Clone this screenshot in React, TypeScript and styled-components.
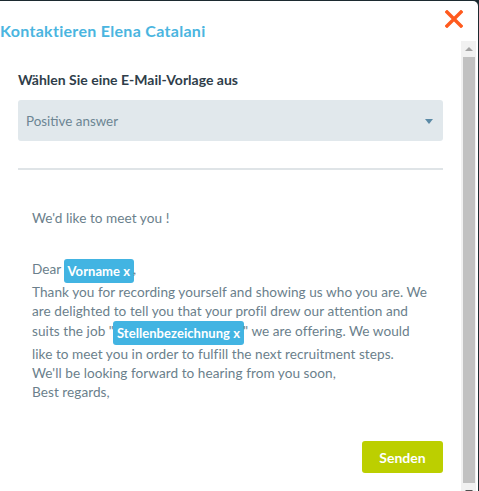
import React from "react";
import styled, { createGlobalStyle } from "styled-components";

const GlobalStyle = createGlobalStyle`
  html, body {
    margin: 0;
    height: 100%;
    overflow: hidden;
    background: #1c2a30;
    font-family: Lato, "Noto Sans", sans-serif;
  }
`;

const Dialog = styled.div`
  width: 478px;
  height: 500px;
  margin-top: 1px;
  background: #ffffff;
  border-top-right-radius: 5px;
  display: flex;
  flex-direction: column;
`;

const Header = styled.div`
  height: 40px;
  flex-shrink: 0;
  display: flex;
  align-items: flex-start;
  justify-content: space-between;
`;

const Title = styled.h2`
  margin: 21px 0 0;
  font-size: 16px;
  font-weight: 700;
  letter-spacing: 0.3px;
  line-height: 18px;
  color: #4ab5e0;
`;

const CloseButton = styled.button`
  margin: 9px 15px 0 0;
  padding: 0;
  border: none;
  background: none;
  width: 18px;
  height: 18px;
  cursor: pointer;
  display: flex;
`;

const Body = styled.div`
  display: flex;
  width: 476px;
  height: 458px;
`;

const Scroller = styled.div`
  flex: 1;
  overflow: hidden;
`;

const Scrollbar = styled.div`
  width: 15px;
  background: #f1f1f1;
  display: flex;
  flex-direction: column;
`;

const ArrowButton = styled.div<{ $down?: boolean }>`
  height: 15px;
  flex-shrink: 0;
  display: flex;
  align-items: center;
  justify-content: center;

  &::after {
    content: "";
    width: 0;
    height: 0;
    border-left: 4px solid transparent;
    border-right: 4px solid transparent;
    ${(p) =>
      p.$down
        ? "border-top: 4px solid #505050;"
        : "border-bottom: 4px solid #a3a3a3;"}
  }
`;

const Thumb = styled.div`
  flex: 1;
  margin: 1px 1px 1px 2px;
  background: #c1c1c1;
`;

const Content = styled.div`
  padding: 31px 18px 26px;
  display: flex;
  flex-direction: column;
`;

const Label = styled.div`
  font-size: 14px;
  font-weight: 700;
  line-height: 16px;
  color: #2f3e4a;
  margin-bottom: 12px;
`;

const Select = styled.div`
  height: 41px;
  border-radius: 3px;
  background: #e1e8ec;
  display: flex;
  align-items: center;
  justify-content: space-between;
  padding: 0 10px 0 8px;
  font-size: 13.4px;
  color: #6c8593;
`;

const Caret = styled.span`
  width: 0;
  height: 0;
  border-left: 4px solid transparent;
  border-right: 4px solid transparent;
  border-top: 5px solid #5b8aa6;
  margin-top: 2px;
`;

const Divider = styled.hr`
  margin: 27px 0 0;
  border: none;
  height: 2px;
  background: #dfe4e7;
`;

const Message = styled.div`
  padding: 39px 14px 0;
  font-size: 13.6px;
  letter-spacing: 0.05px;
  line-height: 19px;
  color: #6b7f8c;
  white-space: nowrap;
`;

const Paragraph = styled.p<{ $gap?: number }>`
  margin: 0 0 ${(p) => p.$gap ?? 0}px;
`;

const Chip = styled.span`
  display: inline-block;
  height: 24px;
  line-height: 24px;
  padding: 0 4px;
  margin: 0 -1px;
  border-radius: 3px;
  background: #42b4e2;
  color: #ffffff;
  font-size: 13px;
  font-weight: 700;
  vertical-align: middle;
`;

const Footer = styled.div`
  display: flex;
  justify-content: flex-end;
  margin-top: 39px;
`;

const SendButton = styled.button`
  width: 81px;
  height: 32px;
  border: none;
  border-radius: 3px;
  background: #bccf00;
  color: #ffffff;
  font-family: inherit;
  font-size: 14px;
  font-weight: 700;
  cursor: pointer;
`;

const CloseIcon = () => (
  <svg width="18" height="18" viewBox="0 0 18 18">
    <path
      d="M2 2 L16 16 M16 2 L2 16"
      stroke="#ff5a1e"
      strokeWidth="3.4"
      strokeLinecap="square"
      fill="none"
    />
  </svg>
);

export default function App() {
  return (
    <>
      <GlobalStyle />
      <Dialog>
        <Header>
          <Title>Kontaktieren Elena Catalani</Title>
          <CloseButton aria-label="close">
            <CloseIcon />
          </CloseButton>
        </Header>
        <Body>
          <Scroller>
            <Content>
              <Label>Wählen Sie eine E-Mail-Vorlage aus</Label>
              <Select>
                Positive answer
                <Caret />
              </Select>
              <Divider />
              <Message>
                <Paragraph $gap={31}>We'd like to meet you !</Paragraph>
                <Paragraph>
                  Dear <Chip>Vorname x</Chip>,
                  <br />
                  Thank you for recording yourself and showing us who you are. We
                  <br />
                  are delighted to tell you that your profil drew our attention and
                  <br />
                  suits the job "<Chip>Stellenbezeichnung x</Chip>" we are offering. We would
                  <br />
                  like to meet you in order to fulfill the next recruitment steps.
                  <br />
                  We'll be looking forward to hearing from you soon,
                  <br />
                  Best regards,
                </Paragraph>
              </Message>
              <Footer>
                <SendButton>Senden</SendButton>
              </Footer>
            </Content>
          </Scroller>
          <Scrollbar>
            <ArrowButton />
            <Thumb />
            <ArrowButton $down />
          </Scrollbar>
        </Body>
      </Dialog>
    </>
  );
}
